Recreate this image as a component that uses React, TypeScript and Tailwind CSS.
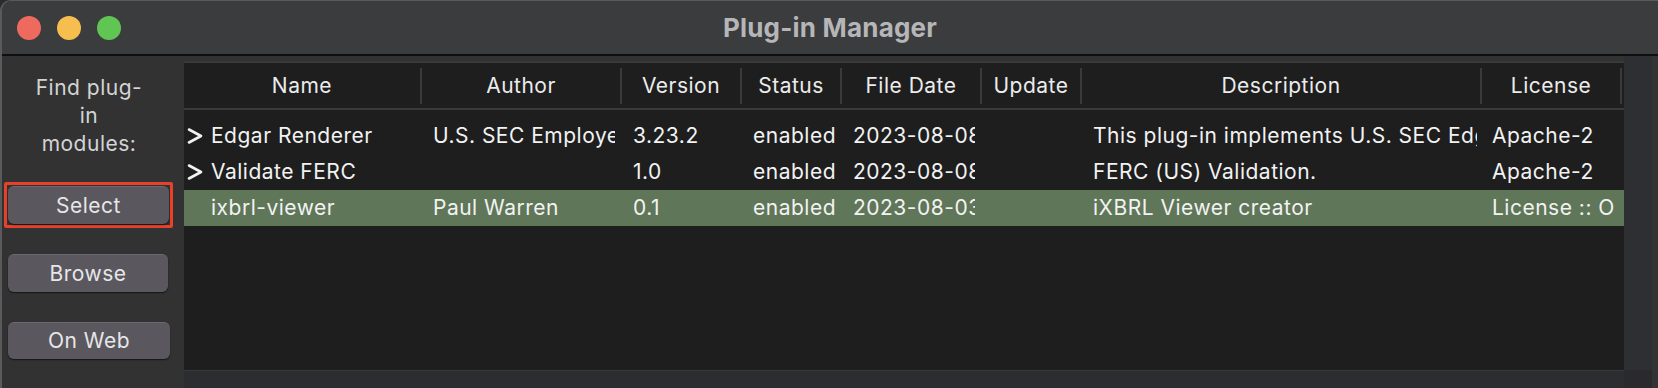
import React from "react";

const FONT = { fontFamily: "Inter, 'Noto Sans', 'Liberation Sans', sans-serif" };

type Row = {
  chevron: boolean;
  name: string;
  author: string;
  version: string;
  status: string;
  date: string;
  update: string;
  desc: string;
  license: string;
  selected?: boolean;
};

const rows: Row[] = [
  { chevron: true, name: "Edgar Renderer", author: "U.S. SEC Employees", version: "3.23.2", status: "enabled", date: "2023-08-08", update: "", desc: "This plug-in implements U.S. SEC Edgar rendering", license: "Apache-2" },
  { chevron: true, name: "Validate FERC", author: "", version: "1.0", status: "enabled", date: "2023-08-08", update: "", desc: "FERC (US) Validation.", license: "Apache-2" },
  { chevron: false, name: "ixbrl-viewer", author: "Paul Warren", version: "0.1", status: "enabled", date: "2023-08-03", update: "", desc: "iXBRL Viewer creator", license: "License :: OSI Approved", selected: true },
];

const cols = [
  { key: "name", label: "Name", w: "w-[238px]" },
  { key: "author", label: "Author", w: "w-[200px]" },
  { key: "version", label: "Version", w: "w-[120px]" },
  { key: "status", label: "Status", w: "w-[100px]" },
  { key: "date", label: "File Date", w: "w-[140px]" },
  { key: "update", label: "Update", w: "w-[100px]" },
  { key: "desc", label: "Description", w: "w-[400px]" },
  { key: "license", label: "License", w: "w-[140px]" },
] as const;

function Chevron() {
  return (
    <svg width="16" height="16" viewBox="0 0 16 16" className="shrink-0">
      <path d="M2 1.5 L14 8 L2 14.5" fill="none" stroke="#f2f2f2" strokeWidth="2.6" strokeLinecap="round" strokeLinejoin="round" />
    </svg>
  );
}

function MacButton({ label, extra = "" }: { label: string; extra?: string }) {
  return (
    <div
      className={`flex items-center justify-center rounded-[6px] bg-[#5a585e] border-t border-[#6c6a70] shadow-[0_1px_1.5px_rgba(0,0,0,0.6)] text-[21px] tracking-[0.5px] text-[#e6e6e8] ${extra}`}
    >
      {label}
    </div>
  );
}

export default function App() {
  return (
    <div className="w-[1658px] h-[388px] bg-[#2b2b2b] overflow-hidden" style={FONT}>
      <div className="w-full h-full rounded-tl-[11px] border-t border-l-2 border-[#5a5a5c] bg-[#323232] flex flex-col overflow-hidden">
        {/* Title bar */}
        <div className="h-[55px] shrink-0 bg-[#3b3c3e] border-b-2 border-[#0e0e0e] grid grid-cols-[1fr_auto_1fr] items-center">
          <div className="flex items-center gap-[16px] pl-[15px]">
            <div className="w-[24px] h-[24px] rounded-full bg-[#ee6a5f]" />
            <div className="w-[24px] h-[24px] rounded-full bg-[#f5be4f]" />
            <div className="w-[24px] h-[24px] rounded-full bg-[#61c554]" />
          </div>
          <div className="text-[26px] font-bold text-[#b6b6b8] tracking-[0.2px]">Plug-in Manager</div>
          <div />
        </div>

        {/* Body */}
        <div className="flex flex-1 min-h-0">
          {/* Left panel */}
          <div className="w-[182px] shrink-0 flex flex-col pl-[2px]">
            <div className="pt-[18px] text-center text-[21px] leading-[28px] tracking-[0.5px] text-[#d4d4d6] w-[170px]">
              Find plug-
              <br />
              in
              <br />
              modules:
            </div>
            <div className="mt-[24px] w-[169px] border-[3px] border-[#e8412b] rounded-[2px] p-[1px]">
              <MacButton label="Select" extra="h-[38px]" />
            </div>
            <div className="mt-[26px] pl-[4px]">
              <MacButton label="Browse" extra="h-[38px] w-[160px]" />
            </div>
            <div className="mt-[30px] pl-[4px]">
              <MacButton label="On Web" extra="h-[37px] w-[162px]" />
            </div>
          </div>

          {/* Table area */}
          <div className="flex flex-1 min-w-0">
            <div className="w-[1440px] shrink-0 flex flex-col pt-[5px]">
              {/* Header */}
              <div className="flex h-[49px] shrink-0 bg-[#1e1e1e] border-t-2 border-b-2 border-[#3a3a3a] text-[21px] tracking-[0.5px] text-[#ececec]">
                {cols.map((c) => (
                  <div key={c.key} className={`${c.w} shrink-0 flex items-center`}>
                    <div className="flex-1 text-center whitespace-nowrap overflow-hidden">{c.label}</div>
                    <div className="w-[2px] h-[36px] bg-[#3a3a3a]" />
                  </div>
                ))}
              </div>
              {/* Rows */}
              <div className="flex-1 bg-[#1e1e1e] pt-[8px]">
                {rows.map((r, i) => (
                  <div
                    key={i}
                    className={`flex h-[36px] items-center text-[21px] tracking-[0.5px] text-[#f2f2f2] ${r.selected ? "bg-[#5f7658]" : ""}`}
                  >
                    <div className="w-[238px] shrink-0 flex items-center pl-[3px] pr-[6px] overflow-hidden whitespace-nowrap">
                      <div className="w-[24px] shrink-0 flex items-center">{r.chevron ? <Chevron /> : null}</div>
                      <span>{r.name}</span>
                    </div>
                    <div className="w-[200px] shrink-0 pl-[11px] pr-[7px]"><div className="overflow-hidden whitespace-nowrap">{r.author}</div></div>
                    <div className="w-[120px] shrink-0 pl-[11px] pr-[7px]"><div className="overflow-hidden whitespace-nowrap">{r.version}</div></div>
                    <div className="w-[100px] shrink-0 pl-[11px] pr-[7px]"><div className="overflow-hidden whitespace-nowrap">{r.status}</div></div>
                    <div className="w-[140px] shrink-0 pl-[11px] pr-[7px]"><div className="overflow-hidden whitespace-nowrap">{r.date}</div></div>
                    <div className="w-[100px] shrink-0 pl-[11px] pr-[7px]"><div className="overflow-hidden whitespace-nowrap">{r.update}</div></div>
                    <div className="w-[400px] shrink-0 pl-[11px] pr-[5px]"><div className="overflow-hidden whitespace-nowrap">{r.desc}</div></div>
                    <div className="w-[140px] shrink-0 pl-[10px] pr-[6px]"><div className="overflow-hidden whitespace-nowrap">{r.license}</div></div>
                  </div>
                ))}
              </div>
              {/* Horizontal scroll track */}
              <div className="h-[18px] shrink-0 bg-[#2c2d30] border-t border-[#38383b]" />
            </div>
            {/* Vertical scroll track */}
            <div className="w-[28px] shrink-0 flex flex-col">
              <div className="flex-1 bg-[#2e2f33]" />
              <div className="h-[18px] bg-[#2a2a2c]" />
            </div>
            <div className="flex-1 bg-[#333333]" />
          </div>
        </div>
      </div>
    </div>
  );
}
